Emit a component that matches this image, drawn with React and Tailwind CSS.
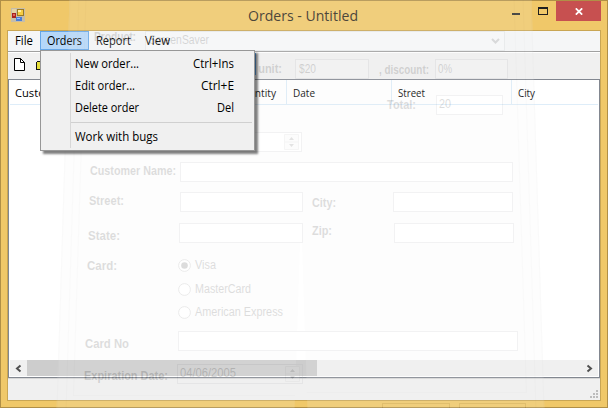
const ui = "font-['Open_Sans','Noto_Sans',sans-serif]";
const form = "font-['Liberation_Sans',Arial,sans-serif]";

// Single-line text pinned to a measured width, so that narrow fonts keep their advance.
function Fit({ w, size, y = 15, bold, h = 22, children, className = "" }) {
  return (
    <svg width={w} height={h} className={"shrink-0 overflow-visible " + className}>
      <text
        x="0"
        y={y}
        fontSize={size}
        fontWeight={bold ? 700 : 400}
        textLength={w}
        lengthAdjust="spacingAndGlyphs"
        fill="currentColor"
      >
        {children}
      </text>
    </svg>
  );
}

function TitleBar() {
  return (
    <header className="flex h-[29px] shrink-0 items-start">
      <svg width="14" height="14" viewBox="0 0 14 14" className="mt-[7px] ml-[10px] shrink-0" shapeRendering="crispEdges">
        <rect width="14" height="14" fill="#c5bda9" />
        <rect x="1" y="1" width="4" height="4" fill="#e4d3a4" />
        <rect x="6" y="1" width="7" height="7" fill="#9a7924" />
        <rect x="7" y="2" width="5" height="5" fill="#f6cd42" />
        <rect x="7" y="2" width="3" height="2" fill="#fff0a6" />
        <rect x="1" y="5" width="4" height="5" fill="#a8231f" />
        <rect x="2" y="6" width="2" height="2" fill="#e0645c" />
        <rect x="5" y="9" width="6" height="4" fill="#4a7ed8" />
        <rect x="6" y="10" width="3" height="1" fill="#9cc0fa" />
      </svg>
      <div className="ml-[223px] text-[#302a1c]">
        <Fit w={110} size={15} y={20}>Orders - Untitled</Fit>
      </div>
      <div className="mt-[12px] ml-[154px] h-[2px] w-[8px] bg-[#302f2b]" />
      <div className="mt-[6px] ml-[18px] h-[8px] w-[10px] border border-t-2 border-[#1f1f1f]" />
      <div className="ml-[8px] flex h-[20px] w-[45px] items-center justify-center bg-[#c75050]">
        <svg width="8" height="7" viewBox="0 0 8 7">
          <path d="M.8.3 7.2 6.7M7.2.3.8 6.7" stroke="#fff" strokeWidth="1.7" />
        </svg>
      </div>
    </header>
  );
}

function MenuBar() {
  return (
    <nav className="flex h-[20px] shrink-0 bg-[#f5f6f7] text-black">
      <Fit w={18} size={12} y={14} h={19} className="ml-[7px]">File</Fit>
      <div className="ml-[7px] flex h-[19px] w-[49px] border border-[#66a7e8] bg-[#b5d7f9] pl-[6px]">
        <Fit w={35} size={12} y={13} h={17}>Orders</Fit>
      </div>
      <Fit w={35} size={12} y={14} h={19} className="ml-[7px]">Report</Fit>
      <Fit w={25} size={12} y={14} h={19} className="ml-[14px]">View</Fit>
    </nav>
  );
}

function ToolBar() {
  return (
    <div className="flex h-[28px] shrink-0 border-t border-[#a0a0a0] bg-[#f0f0f0]">
      <div className="flex w-full border-t border-white pl-[6px]">
        <svg width="11" height="13" viewBox="0 0 11 13" className="mt-[5px]">
          <path d="M.5.5h6l4 4v8H.5z" fill="#fff" stroke="#000" />
          <path d="M6.5.5v4h4" fill="none" stroke="#000" />
        </svg>
        <svg width="12" height="10" viewBox="0 0 12 10" className="mt-[7px] ml-[11px]" shapeRendering="crispEdges">
          <path d="M.5 9.500V2.500l1-1h3l1 1h5v7z" fill="#e6df3a" stroke="#111" />
        </svg>
        <div className="ml-[206px] h-[22px] w-[2px] bg-[#4a9be8]" />
      </div>
    </div>
  );
}

function OrderList() {
  return (
    <main className="flex h-[299px] shrink-0 flex-col border border-[#828790] bg-white p-px pt-0">
      <div className="flex h-[25px] shrink-0 border-b border-[#deedf9] text-black">
        <div className="flex w-[277px] border-r border-[#deedf9] pl-[5px]">
          <Fit w={51} size={11.5} y={17}>Customer</Fit>
          <Fit w={41} size={11.5} y={17} className="ml-[169px]">Quantity</Fit>
        </div>
        <div className="flex w-[105px] border-r border-[#deedf9] pl-[6px]">
          <Fit w={22} size={11.5} y={17}>Date</Fit>
        </div>
        <div className="flex w-[120px] border-r border-[#deedf9] pl-[6px]">
          <Fit w={27} size={11.5} y={17}>Street</Fit>
        </div>
        <Fit w={17} size={11.5} y={17} className="ml-[6px]">City</Fit>
      </div>
      <div className="flex-1" />
      <div className="flex h-[16px] shrink-0 items-center bg-[#f0f0f0]">
        <svg width="17" height="15" className="shrink-0">
          <path d="M10.5 4.5 7 7.5l3.5 3" fill="none" stroke="#505050" strokeWidth="2" />
        </svg>
        <div className="h-full w-[290px] bg-[#cdcdcd]" />
        <div className="flex-1" />
        <svg width="17" height="15" className="shrink-0">
          <path d="m6.5 4.5 3.5 3-3.5 3" fill="none" stroke="#505050" strokeWidth="2" />
        </svg>
      </div>
    </main>
  );
}

function Field({ w, className = "", children }) {
  return (
    <div className={"flex h-[20px] shrink-0 items-center border border-[#a8aab0] bg-white " + className} style={{ width: w }}>
      {children}
    </div>
  );
}

function Spinner() {
  return (
    <svg width="16" height="16" className="mr-[1px] ml-auto shrink-0">
      <path d="M.5.5h14v15H.5zM.5 8h14" fill="#eee" stroke="#bbb" />
      <path d="m5 6 2.500-3L10 6zM5 10l2.500 3L10 10z" fill="#444" />
    </svg>
  );
}

function Radio({ on }) {
  return (
    <svg width="13" height="13" viewBox="0 0 13 13" className="shrink-0">
      <circle cx="6.500" cy="6.500" r="5.900" fill="#fff" stroke="#777" />
      {on && <circle cx="6.500" cy="6.500" r="3.300" fill="#111" />}
    </svg>
  );
}

// The order dialog while it fades out: tapered sides, content at low opacity.
function FadingDialog() {
  return (
    <div className={"pointer-events-none absolute inset-0 overflow-hidden text-[#101010] opacity-[0.14] " + form}>
      <div className="absolute inset-0 flex pr-[71px] pl-[63px]">
        <div className="flex-1 -skew-x-[1.8deg] border-l border-[#dcdcdc] bg-[#f2f2f2] pl-[8px]">
          <div className="h-full border-l border-[#dcdcdc] pl-[6px]">
            <div className="h-[396px] border-b border-l border-[#dcdcdc]" />
          </div>
        </div>
        <div className="flex-1 skew-x-[1.8deg] border-r border-[#dcdcdc] bg-[#f2f2f2] pr-[7px]">
          <div className="h-full border-r border-[#dcdcdc] pr-[8px]">
            <div className="h-[393px] border-r border-b border-[#dcdcdc]" />
          </div>
        </div>
      </div>
      <div className="absolute inset-0 flex flex-col">
        <div className="mt-[31px] flex h-[20px] shrink-0 pl-[94px]">
          <Fit w={42} size={12} y={10} bold>Product:</Fit>
          <Field w={360} className="ml-[9px] pl-[3px]">
            <Fit w={60} size={12} y={13} h={20}>ScreenSaver</Fit>
            <svg width="9" height="6" className="mr-[4px] ml-auto">
              <path d="m1 1 3.500 3.500L8 1" fill="none" stroke="#333" strokeWidth="2" />
            </svg>
          </Field>
        </div>
        <div className="mt-[8px] flex h-[19px] shrink-0 pl-[208px]">
          <Fit w={74} size={12} y={14} bold>Price per unit:</Fit>
          <Field w={74} className="ml-[13px] pl-[3px]">
            <Fit w={17} size={12} y={14} h={20}>$20</Fit>
          </Field>
          <Fit w={50} size={12} y={15} bold className="ml-[10px]">, discount:</Fit>
          <Field w={73} className="ml-[6px] pl-[2px]">
            <Fit w={14} size={12} y={14} h={20}>0%</Fit>
          </Field>
        </div>
        <div className="mt-[17px] flex h-[20px] shrink-0 pl-[387px]">
          <Fit w={29} size={12} y={14} bold>Total:</Fit>
          <Field w={67} className="ml-[20px] pl-[2px]">
            <Fit w={12} size={12} y={13} h={20}>20</Fit>
          </Field>
        </div>
        <div className="mt-[17px] flex h-[20px] shrink-0 pl-[180px]">
          <Field w={122}><Spinner /></Field>
        </div>
        <div className="mt-[10px] flex h-[20px] shrink-0 pl-[90px]">
          <Fit w={86} size={12} y={13} bold>Customer Name:</Fit>
          <Field w={333} className="ml-[4px]" />
        </div>
        <div className="mt-[10px] flex h-[20px] shrink-0 pl-[89px]">
          <Fit w={35} size={12} y={13} bold>Street:</Fit>
          <Field w={123} className="ml-[56px]" />
          <Fit w={24} size={12} y={15} bold className="ml-[9px]">City:</Fit>
          <Field w={120} className="ml-[57px]" />
        </div>
        <div className="mt-[11px] flex h-[20px] shrink-0 pl-[88px]">
          <Fit w={32} size={12} y={17} bold>State:</Fit>
          <Field w={124} className="ml-[59px]" />
          <Fit w={20} size={12} y={12} bold className="ml-[9px]">Zip:</Fit>
          <Field w={120} className="ml-[62px]" />
        </div>
        <div className="mt-[15px] flex h-[14px] shrink-0 items-center pl-[87px]">
          <Fit w={30} size={12} y={12} h={14} bold>Card:</Fit>
          <div className="w-[61px]" />
          <Radio on />
          <Fit w={21} size={12} y={11} h={14} className="ml-[4px]">Visa</Fit>
        </div>
        <div className="mt-[10px] flex h-[14px] shrink-0 items-center pl-[178px]">
          <Radio />
          <Fit w={56} size={12} y={11} h={14} className="ml-[4px]">MasterCard</Fit>
        </div>
        <div className="mt-[9px] flex h-[14px] shrink-0 items-center pl-[178px]">
          <Radio />
          <Fit w={88} size={12} y={11} h={14} className="ml-[4px]">American Express</Fit>
        </div>
        <div className="mt-[12px] flex h-[20px] shrink-0 pl-[85px]">
          <Fit w={44} size={12} y={17} bold>Card No</Fit>
          <Field w={340} className="ml-[49px]" />
        </div>
        <div className="mt-[13px] flex h-[20px] shrink-0 pl-[84px]">
          <Fit w={84} size={12} y={16} bold>Expiration Date:</Fit>
          <div className="ml-[9px] flex h-[20px] w-[126px] items-center border border-[#a8aab0] pl-[2px]">
            <Fit w={56} size={12} y={13} h={20}>04/06/2005</Fit>
            <Spinner />
          </div>
        </div>
        <div className="mt-[19px] flex shrink-0 gap-[9px] pl-[382px]">
          <div className="h-[10px] w-[68px] border border-[#888]" />
          <div className="h-[10px] w-[67px] border border-[#888]" />
        </div>
      </div>
    </div>
  );
}

function MenuItem({ label, w, keys, kw }) {
  return (
    <div className="flex h-[22px] justify-between pr-[20px] pl-[4px]">
      <Fit w={w} size={12.5} y={15}>{label}</Fit>
      {keys && <Fit w={kw} size={12.5} y={15}>{keys}</Fit>}
    </div>
  );
}

function OrdersMenu() {
  return (
    <div className="absolute top-[50px] left-[40px] h-[101px] w-[215px] border border-[#979797] bg-[#f0f0f0] py-[2px] pl-[29px] text-black shadow-[3px_3px_2px_rgba(0,0,0,0.5)]">
      <div className="h-full border-l border-[#d7d7d7]">
        <MenuItem label="New order..." w={64} keys="Ctrl+Ins" kw={41} />
        <MenuItem label="Edit order..." w={60} keys="Ctrl+E" kw={33} />
        <MenuItem label="Delete order" w={64} keys="Del" kw={17} />
        <div className="mt-[3px] mr-[2px] mb-[3px] h-px bg-[#d0d0d0]" />
        <MenuItem label="Work with bugs" w={83} />
      </div>
    </div>
  );
}

export default function App() {
  return (
    <div className={"relative h-[408px] w-[608px] overflow-hidden " + ui}>
      <div className="flex h-full flex-col border border-[#b08f47] bg-[#f0c869]">
        <TitleBar />
        <div className="mx-[6px] flex h-[371px] flex-col border border-[#c9a654] bg-[#f0f0f0]">
          <MenuBar />
          <ToolBar />
          <OrderList />
          <footer className="flex flex-1 items-end justify-end border-t border-[#d7d7d7] pr-[2px] pb-[2px]">
            <svg width="8" height="8" shapeRendering="crispEdges">
              <path d="M6 0h2v2H6zM3 3h2v2H3zM6 3h2v2H6zM0 6h2v2H0zM3 6h2v2H3zM6 6h2v2H6z" fill="#bcbcbc" />
            </svg>
          </footer>
        </div>
      </div>
      <FadingDialog />
      <OrdersMenu />
    </div>
  );
}
